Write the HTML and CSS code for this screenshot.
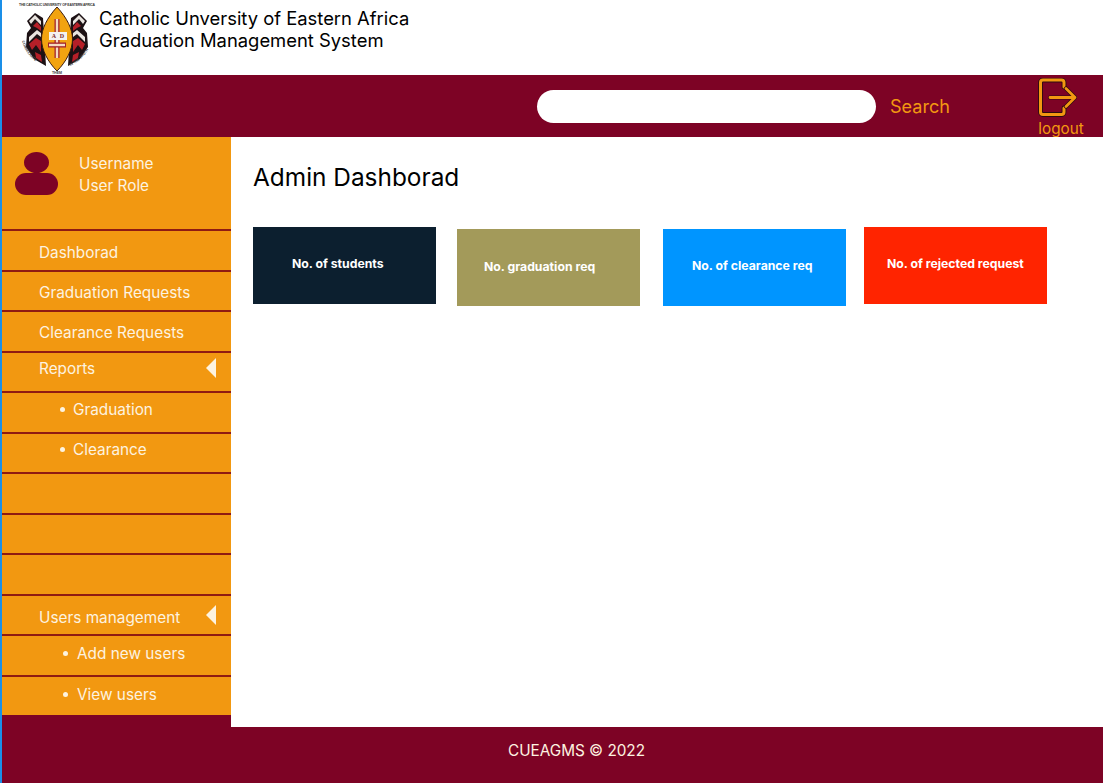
FILE: index.html
```html
<!DOCTYPE html>
<html lang="en">
<head>
    <meta charset="UTF-8">
    <meta name="viewport" content="width=device-width, initial-scale=1.0">
    <title>CUEAGMS Admin Dashboard</title>
    <link rel="stylesheet" href="styles.css">
</head>
<body>
<div class="page">

    <header class="brand">
        <svg class="logo" width="97" height="75" viewBox="2 0 97 75">
            <defs>
                <path id="arcLeft" d="M22 41 Q26 57 43 66"/>
                <path id="arcRight" d="M70 66 Q87 58 92 41"/>
            </defs>
            <text x="57" y="5.6" class="logo-top" text-anchor="middle" textLength="76">THE CATHOLIC UNIVERSITY OF EASTERN AFRICA</text>
            <!-- side shields -->
            <path d="M43 18 L35 13 L27 21 L31 28 L27 33 L26 47 L34 59 L46 66 Z" fill="#1c1114"/>
            <path d="M71 18 L79 13 L87 21 L83 28 L87 33 L88 47 L80 59 L68 66 Z" fill="#1c1114"/>
            <path d="M29 21 L35 15 L41 21 L41 25 L35 19 L31 24 Z M29 37 L37 30 L41 33 L41 37 L37 34 L29 42 Z" fill="#e9e4df"/>
            <path d="M85 21 L79 15 L73 21 L73 25 L79 19 L83 24 Z M85 37 L77 30 L73 33 L73 37 L77 34 L85 42 Z" fill="#e9e4df"/>
            <path d="M33 26 L37 22 L41 27 L41 31 L37 28 Z M29 44 L36 38 L41 41 L41 52 L36 45 L32 50 Z M35 52 L41 55 L42 62 L36 58 Z" fill="#b51f28"/>
            <path d="M81 26 L77 22 L73 27 L73 31 L77 28 Z M85 44 L78 38 L73 41 L73 52 L78 45 L82 50 Z M79 52 L73 55 L72 62 L78 58 Z" fill="#b51f28"/>
            <!-- centre shield -->
            <path d="M57 7 C67 18 72.500 29 72.500 39 C72.500 50 66 62 57 71 C48 62 41.500 50 41.500 39 C41.500 29 47 18 57 7 Z" fill="#f2a310" stroke="#3a1a0e" stroke-width="1"/>
            <rect x="54.500" y="19" width="5" height="39" fill="#a3222a"/>
            <rect x="55.800" y="19" width="2.400" height="39" fill="#f4dcc0"/>
            <rect x="48" y="42.500" width="18" height="5" fill="#a3222a"/>
            <rect x="49" y="43.800" width="16" height="2.400" fill="#f4dcc0"/>
            <rect x="49" y="32" width="18" height="8" fill="#f4f2ef"/>
            <text x="54" y="38.300" class="logo-book" text-anchor="middle">A</text>
            <text x="62" y="38.300" class="logo-book" text-anchor="middle">D</text>
            <text class="logo-motto"><textPath href="#arcLeft">CONSECRATE</textPath></text>
            <text class="logo-motto"><textPath href="#arcRight">IN THE TRUTH</textPath></text>
            <text x="57" y="73.800" class="logo-motto" text-anchor="middle">THEM</text>
        </svg>
        <div class="brand-name">
            <div>Catholic Unversity of Eastern Africa</div>
            <div>Graduation Management System</div>
        </div>
    </header>

    <div class="topbar">
        <input class="search-box" type="text" aria-label="Search">
        <span class="search-label">Search</span>
        <div class="logout">
            <svg width="40" height="39" viewBox="0 0 40 39">
                <path d="M27 9 V4.500 a2.500 2.500 0 0 0 -2.500 -2.500 H6 A2.500 2.500 0 0 0 3.500 4.500 V34 a2.500 2.500 0 0 0 2.500 2.500 H24.500 a2.500 2.500 0 0 0 2.500 -2.500 V30" fill="none" stroke="#2e0c10" stroke-width="4.800" stroke-linecap="round"/>
                <path d="M27 9 V4.500 a2.500 2.500 0 0 0 -2.500 -2.500 H6 A2.500 2.500 0 0 0 3.500 4.500 V34 a2.500 2.500 0 0 0 2.500 2.500 H24.500 a2.500 2.500 0 0 0 2.500 -2.500 V30" fill="none" stroke="#f29811" stroke-width="3" stroke-linecap="round"/>
                <path d="M13 19.500 H38 M29 10.500 L38 19.500 L29 28.500" fill="none" stroke="#2e0c10" stroke-width="4.200" stroke-linecap="round" stroke-linejoin="round"/>
                <path d="M13 19.500 H38 M29 10.500 L38 19.500 L29 28.500" fill="none" stroke="#f29811" stroke-width="2.800" stroke-linecap="round" stroke-linejoin="round"/>
            </svg>
            <span>logout</span>
        </div>
    </div>

    <div class="middle">
        <aside class="sidebar">
            <div class="user-panel">
                <div class="avatar">
                    <div class="avatar-head"></div>
                    <div class="avatar-body"></div>
                </div>
                <div class="user-text">
                    <div>Username</div>
                    <div>User Role</div>
                </div>
            </div>
            <nav>
                <div class="nav-row row-first">Dashborad</div>
                <div class="nav-row row-first">Graduation Requests</div>
                <div class="nav-row row-low">Clearance Requests</div>
                <div class="nav-row nav-parent">Reports <span class="arrow"></span></div>
                <div class="nav-row nav-sub row-high">
                    <span class="dot"></span>Graduation
                </div>
                <div class="nav-row nav-sub nav-wide row-high">
                    <span class="dot"></span>Clearance
                </div>
                <div class="nav-row nav-wide"></div>
                <div class="nav-row nav-wide"></div>
                <div class="nav-row nav-wide"></div>
                <div class="nav-row nav-parent nav-users">Users management <span class="arrow"></span></div>
                <div class="nav-row nav-sub nav-sub-users">
                    <span class="dot"></span>Add new users
                </div>
                <div class="nav-row nav-sub nav-sub-users">
                    <span class="dot"></span>View users
                </div>
            </nav>
        </aside>

        <main class="content">
            <h1>Admin Dashborad</h1>
            <div class="cards">
                <div class="card card-students">No. of students</div>
                <div class="card card-graduation">No. graduation req</div>
                <div class="card card-clearance">No. of clearance req</div>
                <div class="card card-rejected">No. of rejected request</div>
            </div>
        </main>
    </div>

    <footer class="footer">CUEAGMS © 2022</footer>
</div>
</body>
</html>
```

FILE: styles.css
```css
body {
    margin: 0;
    font-family: Inter, "Liberation Sans", sans-serif;
    background-color: white;
}
.page {
    display: flex;
    flex-direction: column;
    height: 783px;
    border-left: 2px solid #1a8fe8;
    overflow: hidden;
}
.brand {
    display: flex;
    height: 75px;
    background-color: white;
}
.logo {
    flex: none;
    display: block;
}
.logo-top {
    font-size: 3.4px;
    font-family: "Liberation Sans", sans-serif;
    font-weight: bold;
    fill: #333;
}
.logo-book {
    font-size: 6px;
    font-weight: bold;
    font-family: "Liberation Serif", serif;
    fill: #7c2a2a;
}
.logo-motto {
    font-size: 3.6px;
    font-family: "Liberation Sans", sans-serif;
    font-weight: bold;
    fill: #444;
}
.brand-name {
    padding-top: 7px;
    font-size: 18.4px;
    line-height: 22px;
    color: #000;
}
.topbar {
    display: flex;
    align-items: flex-start;
    height: 62px;
    background-color: #7d0325;
}
.search-box {
    width: 339px;
    height: 33px;
    margin: 15px 0 0 535px;
    padding: 0;
    border: none;
    border-radius: 17px;
    background-color: white;
    box-sizing: border-box;
}
.search-label {
    margin: 19px 0 0 14px;
    font-size: 18.1px;
    line-height: 24px;
    color: #f29811;
}
.logout {
    display: flex;
    flex-direction: column;
    align-items: center;
    margin: 3px 0 0 87px;
    color: #f29811;
    font-size: 15.3px;
    line-height: 20px;
}
.logout svg {
    display: block;
    margin-right: 8px;
}
.logout span {
    margin-top: 2px;
}
.middle {
    display: flex;
    height: 590px;
}
.sidebar {
    flex: none;
    width: 229px;
    background-color: #7d0325;
    color: #fdf3e0;
    font-size: 15.35px;
}
.user-panel {
    display: flex;
    height: 92px;
    box-sizing: border-box;
    padding: 15px 0 0 13px;
    background-color: #f29811;
}
.avatar {
    width: 43px;
}
.avatar-head {
    width: 25px;
    height: 21px;
    margin-left: 9px;
    border-radius: 50%;
    background-color: #7d0325;
}
.avatar-body {
    height: 22px;
    border-radius: 11px;
    background-color: #7d0325;
}
.user-text {
    margin: 1px 0 0 21px;
    line-height: 22px;
}
.nav-row {
    display: flex;
    align-items: center;
    height: 40.5px;
    box-sizing: border-box;
    padding: 0 15px 0 37px;
    border-top: 2px solid #8f1a12;
    background-color: #f29811;
}
.row-first {
    padding-top: 4px;
}
.row-low {
    padding-top: 2px;
}
.row-high {
    padding-bottom: 6px;
}
.nav-parent {
    justify-content: space-between;
    padding-bottom: 6px;
}
.nav-parent .arrow {
    margin-top: -2px;
}
.nav-users {
    padding-top: 6px;
    padding-bottom: 0;
}
.nav-users .arrow {
    margin-top: -6px;
}
.nav-wide {
    margin-right: -1px;
}
.nav-sub {
    padding-left: 72px;
}
.nav-sub-users {
    padding-left: 75px;
    padding-bottom: 3px;
}
.dot {
    width: 5px;
    height: 5px;
    margin: 0 8px 0 -14px;
    border-radius: 50%;
    background-color: #fdf3e0;
}
.nav-sub-users .dot {
    margin-right: 9px;
}
.arrow {
    width: 0;
    height: 0;
    border-top: 10px solid transparent;
    border-bottom: 10px solid transparent;
    border-right: 10px solid #fdf3e0;
}
.content {
    flex: 1;
    padding: 24px 0 0 22px;
    background-color: white;
}
.content h1 {
    margin: 0;
    font-size: 24.4px;
    font-weight: 400;
    line-height: 32px;
    color: #000;
}
.cards {
    display: flex;
    align-items: flex-start;
    margin-top: 34px;
}
.card {
    display: flex;
    align-items: center;
    width: 183px;
    height: 77px;
    box-sizing: border-box;
    color: white;
    font-size: 12.25px;
    font-weight: 700;
}
.card-students {
    padding: 0 0 5px 39px;
    background-color: #0c1f2f;
}
.card-graduation {
    margin: 2px 0 0 21px;
    padding: 0 0 2px 27px;
    background-color: #a39a5a;
}
.card-clearance {
    margin: 2px 0 0 23px;
    padding: 0 0 4px 29px;
    background-color: #0095ff;
}
.card-rejected {
    margin-left: 18px;
    padding: 0 0 4px 23px;
    background-color: #ff2400;
}
.footer {
    flex: 1;
    display: flex;
    align-items: center;
    justify-content: center;
    padding: 0 0 10px 48px;
    background-color: #7d0325;
    color: #fdf3e0;
    font-size: 15.3px;
}
```
